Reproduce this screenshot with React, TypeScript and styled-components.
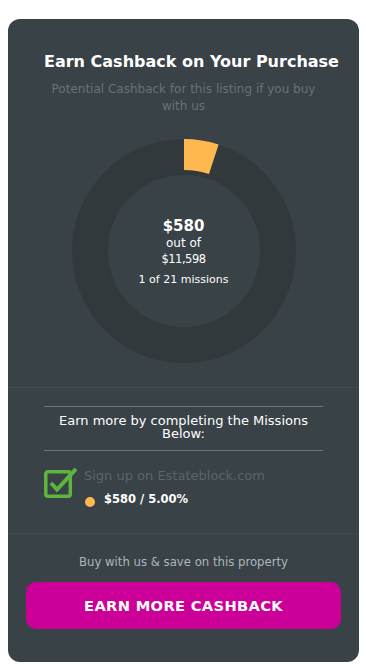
import styled, { createGlobalStyle } from "styled-components";

const GlobalStyle = createGlobalStyle`
  body {
    margin: 0;
    background: #ffffff;
    font-family: "DejaVu Sans", "Liberation Sans", sans-serif;
  }
`;

const Page = styled.div`
  padding: 19px 7px 10px 8px;
`;

const Card = styled.section`
  width: 351px;
  height: 643px;
  box-sizing: border-box;
  background: #394246;
  border-radius: 12px;
  display: flex;
  flex-direction: column;
  overflow: hidden;
`;

const Top = styled.div`
  display: flex;
  flex-direction: column;
  align-items: center;
  padding: 33px 36px 24px;
  border-bottom: 1px solid #424c50;
`;

const Title = styled.h2`
  margin: 0;
  width: 100%;
  color: #ffffff;
  font-size: 16px;
  line-height: 20px;
  font-weight: 700;
  white-space: nowrap;
  text-align: left;
`;

const Subtitle = styled.p`
  margin: 9px 0 0;
  color: #687276;
  font-size: 12px;
  line-height: 17px;
  text-align: center;
`;

const DonutWrap = styled.div`
  position: relative;
  width: 224px;
  height: 224px;
  margin-top: 24px;
`;

const DonutCenter = styled.div`
  position: absolute;
  inset: 0;
  display: flex;
  flex-direction: column;
  align-items: center;
  justify-content: center;
  color: #ffffff;
  font-size: 12px;
  line-height: 16px;
  padding-top: 3px;
`;

const Amount = styled.div`
  font-size: 15px;
  font-weight: 700;
  line-height: 18px;
`;

const Total = styled.div`
  font-size: 11.5px;
  letter-spacing: -0.5px;
`;

const Missions = styled.div`
  margin-top: 5px;
  font-size: 11px;
`;

const MissionSection = styled.div`
  padding: 18px 36px 26px;
  border-bottom: 1px solid #424c50;
`;

const MissionHeading = styled.div`
  border-top: 1px solid #6f777b;
  border-bottom: 1px solid #6f777b;
  padding: 7px 0 10px;
  color: #ffffff;
  font-size: 13px;
  line-height: 13px;
  text-align: center;
`;

const MissionRow = styled.div`
  display: flex;
  gap: 6px;
  margin-top: 17px;
`;

const MissionText = styled.div`
  display: flex;
  flex-direction: column;
`;

const MissionName = styled.div`
  color: #5b656a;
  font-size: 13px;
  line-height: 16px;
`;

const Reward = styled.div`
  display: flex;
  align-items: center;
  gap: 9px;
  margin-top: 7px;
  color: #ffffff;
  font-size: 11.5px;
  font-weight: 700;
`;

const Dot = styled.span<{ $color: string }>`
  width: 10px;
  height: 10px;
  border-radius: 50%;
  background: ${(p) => p.$color};
  margin: 6px 0 0 1px;
`;

const Footer = styled.div`
  display: flex;
  flex-direction: column;
  align-items: center;
  padding: 20px 18px 0;
`;

const FooterText = styled.p`
  margin: 0;
  color: #aeb6ba;
  font-size: 11.7px;
  line-height: 16px;
`;

const CashbackButton = styled.button`
  margin-top: 12px;
  width: 315px;
  height: 47px;
  border: none;
  border-radius: 10px;
  background: #cc0099;
  color: #ffffff;
  font-family: inherit;
  font-size: 14.7px;
  font-weight: 700;
  letter-spacing: 0.3px;
  cursor: pointer;
`;

function Donut() {
  return (
    <svg width="224" height="224" viewBox="0 0 224 224">
      <circle cx="112" cy="112" r="94" fill="none" stroke="#31393c" strokeWidth="36" />
      <path d="M112 0 A112 112 0 0 1 146.6 5.5 L137 35 A81 81 0 0 0 112 31 Z" fill="#ffb84f" />
    </svg>
  );
}

function CheckIcon() {
  return (
    <svg width="34" height="30" viewBox="0 0 34 30">
      <rect x="1.8" y="3.8" width="24.5" height="24.5" rx="2" fill="none" stroke="#5cb53f" strokeWidth="3.5" />
      <path d="M7 15 L13 21.5 L32 1" fill="none" stroke="#5cb53f" strokeWidth="4" />
    </svg>
  );
}

export default function App() {
  return (
    <Page>
      <GlobalStyle />
      <Card>
        <Top>
          <Title>Earn Cashback on Your Purchase</Title>
          <Subtitle>Potential Cashback for this listing if you buy with us</Subtitle>
          <DonutWrap>
            <Donut />
            <DonutCenter>
              <Amount>$580</Amount>
              <div>out of</div>
              <Total>$11,598</Total>
              <Missions>1 of 21 missions</Missions>
            </DonutCenter>
          </DonutWrap>
        </Top>
        <MissionSection>
          <MissionHeading>Earn more by completing the Missions Below:</MissionHeading>
          <MissionRow>
            <CheckIcon />
            <MissionText>
              <MissionName>Sign up on Estateblock.com</MissionName>
              <Reward>
                <Dot $color="#ffb84f" />
                $580 / 5.00%
              </Reward>
            </MissionText>
          </MissionRow>
        </MissionSection>
        <Footer>
          <FooterText>Buy with us &amp; save on this property</FooterText>
          <CashbackButton>EARN MORE CASHBACK</CashbackButton>
        </Footer>
      </Card>
    </Page>
  );
}
